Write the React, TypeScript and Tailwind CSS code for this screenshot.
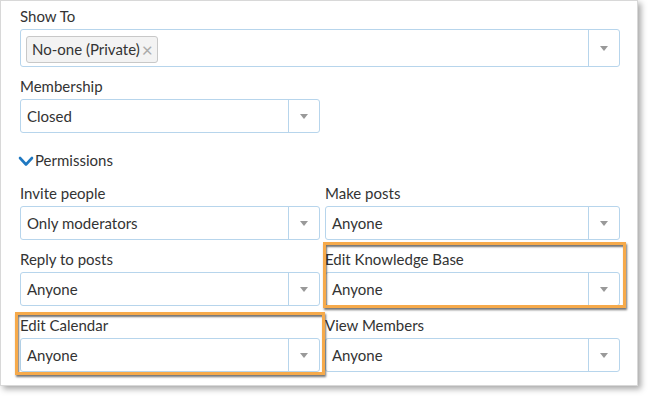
import React from "react";

function Arrow() {
  return (
    <div className="w-0 h-0 border-l-[4px] border-r-[4px] border-t-[5px] border-l-transparent border-r-transparent border-t-[#999]" />
  );
}

function Select({ value, wide }: { value: string; wide?: boolean }) {
  return (
    <div
      className={`flex h-[34px] rounded-[3px] border border-[#b7d5ec] bg-white ${
        wide ? "w-[295px]" : "w-[300px]"
      }`}
    >
      <div className="flex-1 flex items-center pl-[6px] text-[15px] text-[#333]">{value}</div>
      <div className="w-[31px] border-l border-[#b7d5ec] flex items-center justify-center">
        <Arrow />
      </div>
    </div>
  );
}

function Label({ children }: { children: React.ReactNode }) {
  return <div className="h-[17px] leading-[17px] text-[15px] text-[#333] mb-[4px]">{children}</div>;
}

function Field({ label, value, right }: { label: string; value: string; right?: boolean }) {
  return (
    <div>
      <Label>{label}</Label>
      <Select value={value} wide={right} />
    </div>
  );
}

export default function App() {
  return (
    <div className="relative w-[649px] h-[397px] bg-white font-['Lato','Noto_Sans',sans-serif]">
      <div className="w-[638px] h-[386px] border border-[#d8d8d8] bg-white shadow-[3px_3px_6px_rgba(0,0,0,0.35)] pl-[19px] pt-[7px]">
        {/* Show To */}
        <Label>Show To</Label>
        <div className="flex h-[38px] w-[600px] rounded-[3px] border border-[#b7d5ec] bg-white">
          <div className="flex-1 pl-[5px] pt-[6px]">
            <div className="inline-flex items-center h-[27px] rounded-[3px] border border-[#c8c8c8] bg-[#f3f3f3] pl-[5px] pr-[4px] text-[15px] text-[#333]">
              No-one (Private)
              <span className="ml-[2px] text-[#aaa] text-[19px] leading-none">×</span>
            </div>
          </div>
          <div className="w-[31px] border-l border-[#b7d5ec] flex items-center justify-center">
            <Arrow />
          </div>
        </div>

        {/* Membership */}
        <div className="mt-[11px]">
          <Field label="Membership" value="Closed" />
        </div>

        {/* Permissions */}
        <div className="mt-[18px] flex items-center h-[18px] -ml-[2px]">
          <svg width="16" height="11" viewBox="0 0 16 11" className="mr-[1px] mt-[2px]">
            <polyline
              points="2,2 8,8.5 14,2"
              fill="none"
              stroke="#1f78c1"
              strokeWidth="2.6"
              strokeLinecap="round"
              strokeLinejoin="round"
            />
          </svg>
          <span className="text-[15px] leading-[18px] text-[#333]">Permissions</span>
        </div>

        <div className="mt-[16px] grid grid-cols-[300px_295px] gap-x-[5px] gap-y-[11px]">
          <Field label="Invite people" value="Only moderators" />
          <Field label="Make posts" value="Anyone" right />
          <Field label="Reply to posts" value="Anyone" />
          <Field label="Edit Knowledge Base" value="Anyone" right />
          <Field label="Edit Calendar" value="Anyone" />
          <Field label="View Members" value="Anyone" right />
        </div>
      </div>

      {/* Highlight annotations */}
      <div className="absolute left-[323px] top-[242px] w-[303px] h-[66px] border-[3px] border-[#f6aa4b] shadow-[1px_2px_2px_rgba(0,0,0,0.55),inset_1px_2px_2px_rgba(0,0,0,0.55)]" />
      <div className="absolute left-[15px] top-[312px] w-[310px] h-[63px] border-[3px] border-[#f6aa4b] shadow-[1px_2px_2px_rgba(0,0,0,0.55),inset_1px_2px_2px_rgba(0,0,0,0.55)]" />
    </div>
  );
}
